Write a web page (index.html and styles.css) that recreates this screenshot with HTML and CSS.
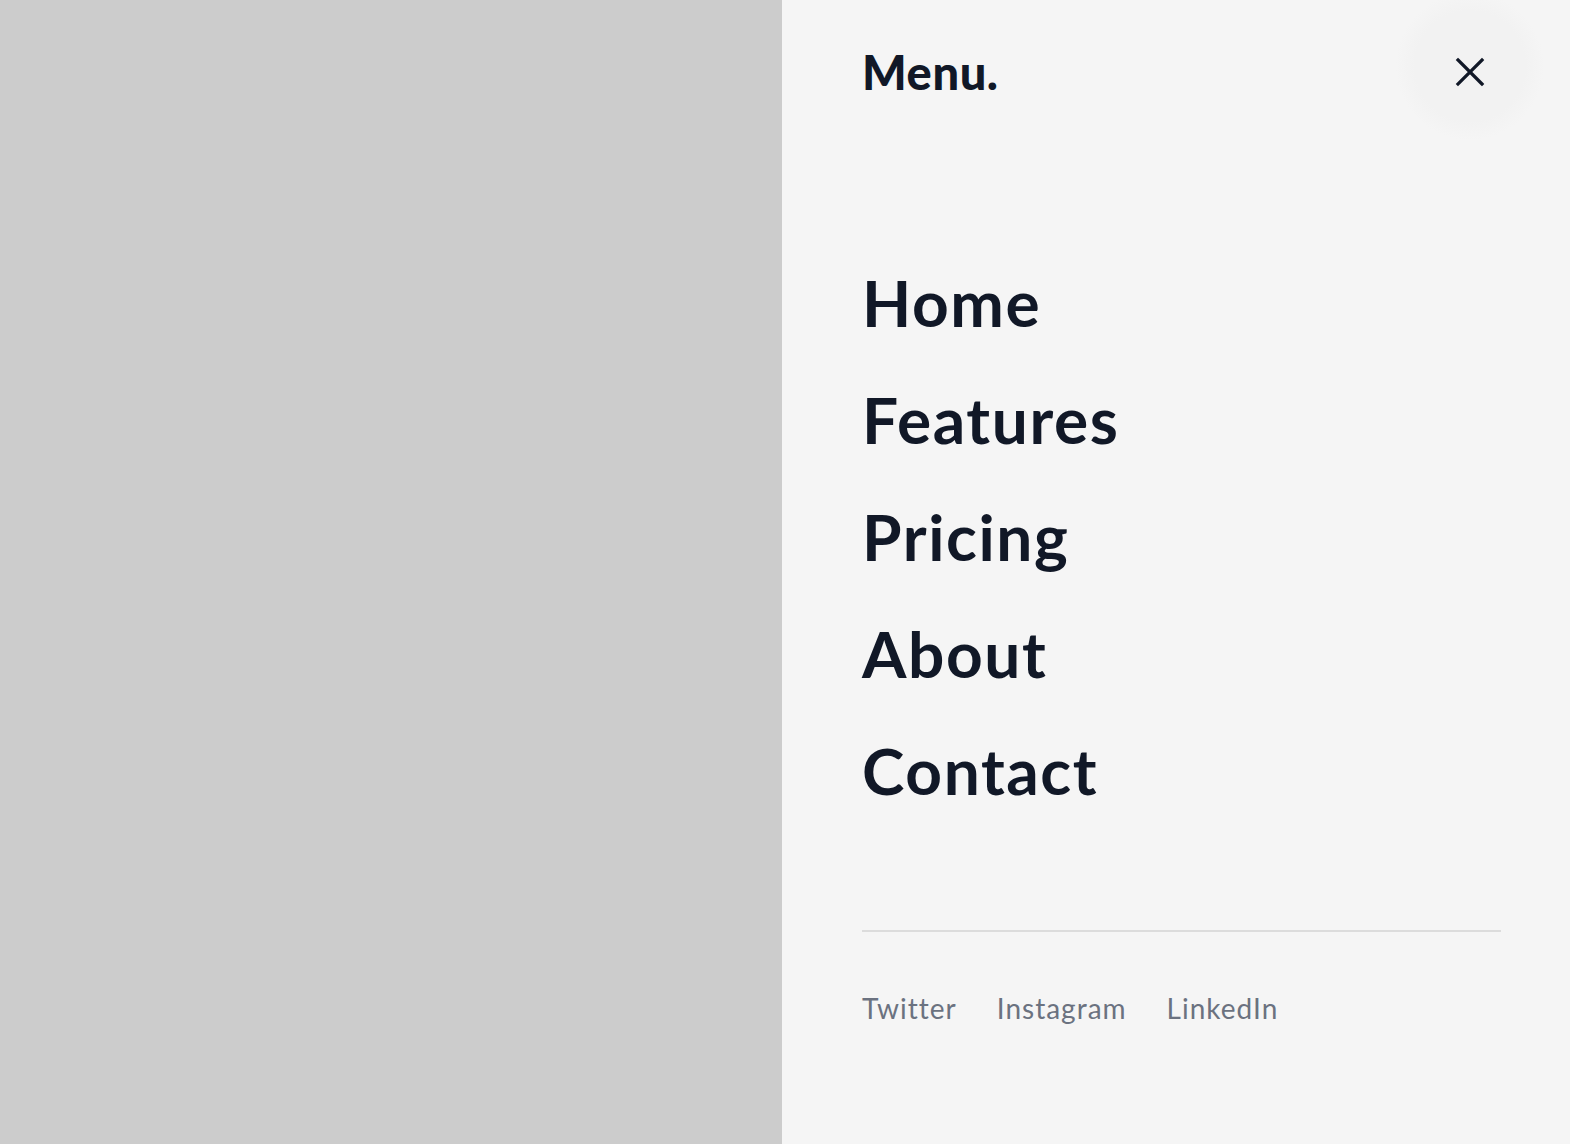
FILE: index.html
```html
<!DOCTYPE html>
<html lang="en">
<head>
<meta charset="utf-8">
<title>Menu</title>
<link rel="stylesheet" href="styles.css">
</head>
<body>
<div class="backdrop"></div>
<aside class="drawer">
  <header class="drawer-head">
    <span class="brand">Menu.</span>
    <button class="close" aria-label="Close menu">
      <svg width="30" height="30" viewBox="0 0 30 30" fill="none" stroke="#111827" stroke-width="3.2" stroke-linecap="square">
        <path d="M3 3 L27 27 M27 3 L3 27"/>
      </svg>
    </button>
  </header>
  <nav class="main-nav">
    <a href="#">Home</a>
    <a href="#">Features</a>
    <a href="#">Pricing</a>
    <a href="#">About</a>
    <a href="#">Contact</a>
  </nav>
  <hr class="rule">
  <ul class="social">
    <li><a href="#">Twitter</a></li>
    <li><a href="#">Instagram</a></li>
    <li><a href="#">LinkedIn</a></li>
  </ul>
</aside>
</body>
</html>
```
FILE: styles.css
```css
html, body {
  margin: 0;
  height: 100%;
}
body {
  display: flex;
  height: 1144px;
  overflow: hidden;
  font-family: "Lato", "Liberation Sans", sans-serif;
  color: #111827;
}
.backdrop {
  flex: 0 0 782px;
  background: #cccccc;
}
.drawer {
  flex: 1;
  background: #f5f5f5;
  padding: 0 69px 0 80px;
  display: flex;
  flex-direction: column;
}
.drawer-head {
  height: 144px;
  display: flex;
  align-items: center;
  justify-content: space-between;
}
.brand {
  font-size: 47px;
  font-weight: 900;
  letter-spacing: 0.6px;
  line-height: 1;
}
.close {
  width: 150px;
  height: 150px;
  margin-right: -44px;
  margin-top: -12px;
  border: 0;
  border-radius: 50%;
  background: radial-gradient(circle, #f2f2f2 52%, rgba(242,242,242,0) 70%);
  display: flex;
  align-items: center;
  justify-content: center;
  padding: 0;
  cursor: pointer;
}
.close svg {
  margin-top: 12px;
}
.main-nav {
  margin-top: 100px;
  display: flex;
  flex-direction: column;
}
.main-nav a {
  font-size: 64px;
  font-weight: 700;
  line-height: 117px;
  letter-spacing: 1.6px;
  color: #111827;
  text-decoration: none;
}
.rule {
  margin: 101px 0 0;
  border: 0;
  height: 2px;
  background: #dcdcdc;
}
.social {
  list-style: none;
  margin: 56px 0 0;
  padding: 0;
  display: flex;
  gap: 40px;
}
.social a {
  font-size: 28px;
  line-height: 40px;
  letter-spacing: 1px;
  color: #6b7280;
  text-decoration: none;
}
```
